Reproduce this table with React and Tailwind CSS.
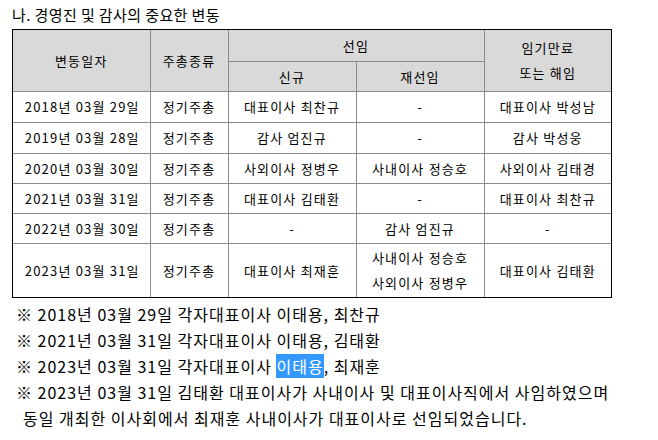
import React from 'react';

const font = 'font-[Noto_Sans_CJK_KR,sans-serif]';

const rows = [
  { date: '2018년 03월 29일', kind: '정기주총', newly: ['대표이사 최찬규'], again: ['-'], out: '대표이사 박성남', h: 'h-[31px]' },
  { date: '2019년 03월 28일', kind: '정기주총', newly: ['감사 엄진규'], again: ['-'], out: '감사 박성웅', h: 'h-[31px]' },
  { date: '2020년 03월 30일', kind: '정기주총', newly: ['사외이사 정병우'], again: ['사내이사 정승호'], out: '사외이사 김태경', h: 'h-[30px]' },
  { date: '2021년 03월 31일', kind: '정기주총', newly: ['대표이사 김태환'], again: ['-'], out: '대표이사 최찬규', h: 'h-[30px]' },
  { date: '2022년 03월 30일', kind: '정기주총', newly: ['-'], again: ['감사 엄진규'], out: '-', h: 'h-[30px]' },
  { date: '2023년 03월 31일', kind: '정기주총', newly: ['대표이사 최재훈'], again: ['사내이사 정승호', '사외이사 정병우'], out: '대표이사 김태환', h: 'h-[54px]' },
];

const cell = 'border border-[#8c8c8c] text-center align-middle p-0 leading-[25px]';

export default function App() {
  return (
    <div className={`w-[658px] h-[440px] bg-white text-black ${font}`}>
      {/* Title */}
      <div className="pl-3 pt-[4px] text-[15px] leading-[22px] tracking-[0.4px]">나. 경영진 및 감사의 중요한 변동</div>

      {/* Table */}
      <div className="ml-3 mt-[3px] w-[600px] border border-black">
        <table className="w-[598px] table-fixed border-collapse border-hidden text-[13px] tracking-[1.2px]">
          <colgroup>
            <col className="w-[137px]" />
            <col className="w-[78px]" />
            <col className="w-[128px]" />
            <col className="w-[128px]" />
            <col className="w-[127px]" />
          </colgroup>
          <thead className="bg-[#d9d9d9]">
            <tr className="h-[31px]">
              <th rowSpan={2} className={`${cell} font-normal`}>변동일자</th>
              <th rowSpan={2} className={`${cell} font-normal`}>주총종류</th>
              <th colSpan={2} className={`${cell} font-normal`}>선임</th>
              <th rowSpan={2} className={`${cell} font-normal leading-[24px]`}>
                임기만료<br />또는 해임
              </th>
            </tr>
            <tr className="h-[30px]">
              <th className={`${cell} font-normal`}>신규</th>
              <th className={`${cell} font-normal`}>재선임</th>
            </tr>
          </thead>
          <tbody>
            {rows.map((r) => (
              <tr key={r.date} className={r.h}>
                <td className={`${cell} pl-[2px]`}>{r.date}</td>
                <td className={cell}>{r.kind}</td>
                <td className={cell}>{r.newly.map((t) => <div key={t}>{t}</div>)}</td>
                <td className={cell}>{r.again.map((t) => <div key={t}>{t}</div>)}</td>
                <td className={cell}>{r.out}</td>
              </tr>
            ))}
          </tbody>
        </table>
      </div>

      {/* Notes */}
      <div className="pl-4 mt-[3px] text-[16px] leading-[26px] tracking-[1px]">
        <div>※ 2018년 03월 29일 각자대표이사 이태용, 최찬규</div>
        <div>※ 2021년 03월 31일 각자대표이사 이태용, 김태환</div>
        <div>
          ※ 2023년 03월 31일 각자대표이사 <span className="bg-[#3399ff] text-white">이태용</span>, 최재훈
        </div>
        <div>※ 2023년 03월 31일 김태환 대표이사가 사내이사 및 대표이사직에서 사임하였으며</div>
        <div className="pl-[7px]">동일 개최한 이사회에서 최재훈 사내이사가 대표이사로 선임되었습니다.</div>
      </div>
    </div>
  );
}
